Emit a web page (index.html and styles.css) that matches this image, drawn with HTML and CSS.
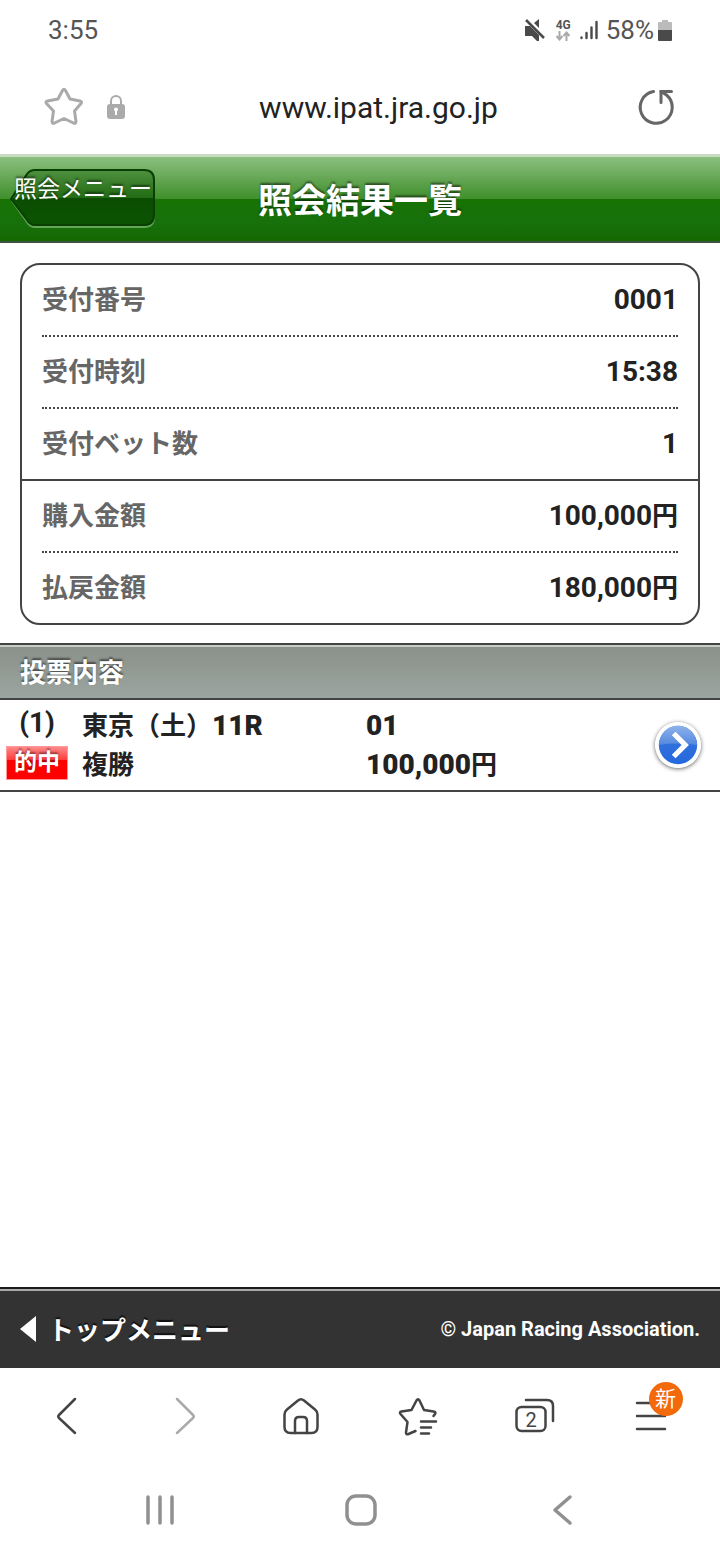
FILE: index.html
```html
<!DOCTYPE html>
<html lang="ja">
<head>
  <meta charset="UTF-8" />
  <meta name="viewport" content="width=device-width, initial-scale=1.0"/>
  <title>照会結果一覧</title>
  <link rel="stylesheet" href="styles.css">
</head>
<body>
  <!-- Status bar -->
  <div class="status-bar">
    <span>3:55</span>
    <div class="status-icons">
      <svg class="mute" width="20" height="22" viewBox="0 0 20 22">
        <path d="M0 7h5l9 9v6h-2l-5-5H0z" fill="#4a4a4a"/>
        <path d="M14 0v9l-5-5z" fill="#4a4a4a"/>
        <path d="M1 1l18 18" stroke="#4a4a4a" stroke-width="2.5"/>
      </svg>
      <div class="network">
        <span>4G</span>
        <svg width="14" height="10" viewBox="0 0 14 10" fill="none" stroke="#aaa" stroke-width="2">
          <path d="M3.500 0v8M0.500 5l3 3.500 3-3.500M10.500 10V2M7.500 5l3-3.500 3 3.500"/>
        </svg>
      </div>
      <svg class="signal" width="18" height="20" viewBox="0 0 18 20" fill="none" stroke="#4a4a4a" stroke-width="2.400" stroke-linecap="round">
        <path d="M1.500 17.500v.5M6.500 13v5M11.500 7.500V18M16.500 2v16"/>
      </svg>
      <span>58%</span>
      <svg class="battery" width="14" height="21" viewBox="0 0 14 21">
        <path d="M1 2h3V0h6v2h3q1 0 1 1v8H0V3q0-1 1-1z" fill="#bbb"/>
        <path d="M0 10h14v10q0 1-1 1H1q-1 0-1-1z" fill="#4a4a4a"/>
      </svg>
    </div>
  </div>

  <!-- Address bar -->
  <div class="address-bar">
    <button type="button" aria-label="お気に入り">
      <svg width="40" height="40" viewBox="0 0 40 40" fill="none" stroke="#aaa" stroke-width="3" stroke-linejoin="round">
        <path d="M18.500 3.500q1.500-2.500 3 0L26 12l10 2q2.500.5 1 2.500L30.500 24 32 34.500q0 2.500-2.500 1.500L20 31.500 10.500 36Q8 37 8 34.500L9.500 24 2.500 16.500q-1.500-2 1-2.500L14 12z"/>
      </svg>
    </button>
    <svg class="lock" width="18" height="26" viewBox="0 0 18 26">
      <path d="M4 12V7a5 5 0 0 1 10 0v5" fill="none" stroke="#aaa" stroke-width="2"/>
      <rect y="10" width="18" height="15" rx="3" fill="#aaa"/>
      <circle cx="9" cy="15.500" r="2" fill="#fff"/>
      <path d="M9 16v5" stroke="#fff" stroke-width="2"/>
    </svg>
    <span class="url">www.ipat.jra.go.jp</span>
    <button type="button" class="reload" aria-label="再読み込み">
      <svg width="40" height="40" viewBox="0 0 40 40" fill="none" stroke="#666" stroke-width="3" stroke-linecap="round">
        <path d="M17.500 4.500a16 16 0 1 0 13 3.500L25 4.500"/>
        <path d="M25 15.500v-11h10.500"/>
      </svg>
    </button>
  </div>

  <header class="page-header">
    <a href="#" class="back-link">
      <svg class="back-shape" width="146" height="61" viewBox="0 0 146 61">
        <defs>
          <linearGradient id="backFill" x1="0" y1="0" x2="0" y2="1">
            <stop offset="0" stop-color="#4f913f"/>
            <stop offset=".5" stop-color="#236b15"/>
            <stop offset=".5" stop-color="#0b4d02"/>
            <stop offset="1" stop-color="#0b5402"/>
          </linearGradient>
        </defs>
        <path d="M25 3h109q10 0 10 10v35q0 10-10 10H25q-5 0-8-5L2 32" fill="none" stroke="#65a557" stroke-width="2"/>
        <path d="M25 1h109q10 0 10 10v35q0 10-10 10H25q-5 0-8-5L1 30 17 5q3-4 8-4z" fill="url(#backFill)" stroke="#083f02" stroke-width="2"/>
      </svg>
      <span>照会メニュー</span>
    </a>
    <h1>照会結果一覧</h1>
  </header>

  <main>
    <dl class="summary">
      <div class="row"><dt>受付番号</dt><dd>0001</dd></div>
      <div class="row"><dt>受付時刻</dt><dd>15:38</dd></div>
      <div class="row"><dt>受付ベット数</dt><dd>1</dd></div>
      <div class="row group"><dt>購入金額</dt><dd>100,000<span>円</span></dd></div>
      <div class="row"><dt>払戻金額</dt><dd>180,000<span>円</span></dd></div>
    </dl>

    <h2>投票内容</h2>
    <a href="#" class="bet">
      <div class="bet-no">
        <span>(1)</span>
        <span class="hit">的中</span>
      </div>
      <div class="bet-race">
        <span>東京（土）<b>11R</b></span>
        <span>複勝</span>
      </div>
      <div class="bet-amount">
        <b>01</b>
        <span><b>100,000</b>円</span>
      </div>
      <svg class="bet-arrow" width="46" height="46" viewBox="0 0 48 48">
        <defs>
          <linearGradient id="arrowTop" x1="0" y1="0" x2="0" y2="1">
            <stop offset="0" stop-color="#8fb2ea"/>
            <stop offset="1" stop-color="#5288df"/>
          </linearGradient>
          <linearGradient id="arrowFill" x1="0" y1="0" x2="0" y2="1">
            <stop offset="0" stop-color="#3f78d8"/>
            <stop offset="1" stop-color="#2268df"/>
          </linearGradient>
        </defs>
        <circle cx="24" cy="24" r="24" fill="#fff"/>
        <circle cx="24" cy="24" r="20" fill="url(#arrowFill)"/>
        <path d="M4 24a20 20 0 0 1 40 0q-20-3-40 0z" fill="url(#arrowTop)"/>
        <path d="M19.500 12l12 12-12 12" fill="none" stroke="#fff" stroke-width="5.500"/>
      </svg>
    </a>
  </main>

  <footer class="page-footer">
    <a href="#">
      <svg width="16" height="26" viewBox="0 0 16 26"><path d="M16 0v26L0 13z" fill="#fff"/></svg>
      トップメニュー
    </a>
    <small>© Japan Racing Association.</small>
  </footer>

  <!-- Browser toolbar -->
  <nav class="toolbar">
    <button type="button" aria-label="戻る">
      <svg width="40" height="40" viewBox="0 0 40 40"><path d="M28 3L12 19q-1.500 1.500 0 3l16 15"/></svg>
    </button>
    <button type="button" aria-label="進む" disabled>
      <svg width="40" height="40" viewBox="0 0 40 40"><path d="M13 3l16 16q1.500 1.500 0 3L13 37"/></svg>
    </button>
    <button type="button" aria-label="ホーム">
      <svg width="40" height="40" viewBox="0 0 40 40">
        <path d="M17 4.500q3-2.500 6 0l11 9q2.500 2 2.500 5V31q0 6-6 6h-21q-6 0-6-6V18.500q0-3 2.500-5z"/>
        <path d="M14 37V25q0-4 4-4h4q4 0 4 4v12"/>
      </svg>
    </button>
    <button type="button" aria-label="ブックマーク">
      <svg width="40" height="40" viewBox="0 0 40 40">
        <path d="M17.500 35L10.500 38q-2.500 1-2.500-1.500L9.500 26 2.500 18q-1.500-2 1-2.500l10-1.500 5-9.500q1.500-2.500 3 0l4.500 9.500 9.500 1.500q3 .5 1.500 2.500L35.500 20"/>
        <path d="M23 25.500h15M23 31.500h10M23 37.500h8"/>
      </svg>
    </button>
    <button type="button" class="tabs" aria-label="タブ">
      <svg width="40" height="40" viewBox="0 0 40 40">
        <rect x="1.500" y="11" width="29" height="24" rx="5"/>
        <path d="M11 4h21q6 0 6 6v15"/>
        <text x="16" y="31" text-anchor="middle">2</text>
      </svg>
    </button>
    <button type="button" class="menu" aria-label="メニュー">
      <svg width="40" height="40" viewBox="0 0 40 40"><path d="M5 7h28M5 20h28M5 33h28"/></svg>
      <span class="new">新</span>
    </button>
  </nav>

  <!-- System navigation -->
  <nav class="system-nav">
    <button type="button" aria-label="履歴">
      <svg width="32" height="32" viewBox="0 0 32 32"><path d="M4 3v26M16 3v26M28 3v26"/></svg>
    </button>
    <button type="button" aria-label="ホーム画面">
      <svg width="32" height="32" viewBox="0 0 32 32"><rect x="2" y="2" width="28" height="28" rx="9"/></svg>
    </button>
    <button type="button" aria-label="前の画面">
      <svg width="32" height="32" viewBox="0 0 32 32"><path d="M24 3L9 16l15 13"/></svg>
    </button>
  </nav>
</body>
</html>
```

FILE: styles.css
```css
* {
  box-sizing: border-box;
}
body {
  margin: 0;
  min-height: 100vh;
  display: flex;
  flex-direction: column;
  background: #fff;
  color: #222;
  font-family: Roboto, "Noto Sans CJK JP", sans-serif;
  font-size: 26px;
}
a {
  color: inherit;
  text-decoration: none;
}
button {
  background: none;
  border: none;
  padding: 0;
  font-family: inherit;
}
svg {
  display: block;
}

/* status bar */
.status-bar {
  display: flex;
  justify-content: space-between;
  align-items: center;
  height: 60px;
  padding: 0 48px;
  color: #555;
}
.status-icons {
  display: flex;
  align-items: center;
  gap: 4px;
}
.network {
  display: flex;
  flex-direction: column;
  align-items: center;
  margin: 0 5px 0 7px;
  font-size: 12px;
  font-weight: bold;
  line-height: 12px;
}
.signal {
  margin-right: 4px;
}

/* address bar */
.address-bar {
  display: flex;
  align-items: center;
  height: 94px;
  padding: 0 40px 0 44px;
}
.lock {
  margin-left: 23px;
}
.url {
  flex: 1;
  text-align: center;
  font-size: 30px;
}
.reload {
  width: 48px;
  display: flex;
  justify-content: center;
}

/* page header */
.page-header {
  display: grid;
  grid-template-columns: 1fr auto 1fr;
  align-items: center;
  height: 89px;
  padding: 0 10px;
  border-top: 3px solid #c8dcc2;
  border-bottom: 2px solid #40533c;
  background: linear-gradient(#8cbf80, #3f8f2b 50%, #187304 50%, #17700c 80%, #156800);
  color: #fff;
}
.page-header h1 {
  margin: 0;
  padding-top: 4px;
  font-size: 34px;
  line-height: 50px;
  text-shadow: 0 -2px 2px rgba(0,0,0,0.5);
}
.back-link {
  position: relative;
  justify-self: start;
  width: 146px;
  height: 61px;
  padding-left: 4px;
  font-size: 23px;
  line-height: 42px;
  white-space: nowrap;
  text-shadow: 0 -2px 2px rgba(0,0,0,0.5);
}
.back-shape {
  position: absolute;
  top: 0;
  left: 0;
}
.back-link span {
  position: relative;
}

/* content */
main {
  flex: 1;
}
.summary {
  margin: 20px 20px 18px;
  border: 2px solid #444;
  border-radius: 20px;
  font-weight: bold;
}
.row {
  display: flex;
  justify-content: space-between;
  align-items: baseline;
  height: 72px;
  margin: 0 20px;
  padding-top: 14px;
  border-bottom: 2px dotted #444;
}
.row:last-child {
  height: 70px;
  border-bottom: none;
}
.row:has(+ .group) {
  margin: 0;
  padding: 14px 20px 0;
  border-bottom: 2px solid #444;
}
.row dt {
  color: #666;
}
.row dd {
  margin: 0;
  font-size: 28px;
}
.row dd span {
  font-size: 26px;
}
h2 {
  margin: 0;
  padding: 4px 20px 0;
  border-top: 2px solid #444;
  border-bottom: 2px solid #444;
  background: linear-gradient(#c8ccc9 2px, #8b918b 2px, #9ba59f);
  color: #fff;
  font-size: 26px;
  line-height: 49px;
  text-shadow: 0 -2px 2px rgba(0,0,0,0.5);
}
.bet {
  display: flex;
  align-items: center;
  height: 92px;
  padding: 0 19px 0 6px;
  border-bottom: 2px solid #444;
  font-weight: bold;
  line-height: 39px;
}
.bet b {
  font-size: 28px;
}
.bet-no {
  display: flex;
  flex-direction: column;
  align-items: center;
  width: 62px;
  margin-right: 14px;
  padding-bottom: 4px;
  font-size: 28px;
  line-height: 34px;
}
.hit {
  width: 100%;
  margin-top: 6px;
  border: 1px solid #f99;
  background: linear-gradient(#ff8a8a, #ff3c3c 40%, #f00 40%, #f00);
  color: #fff;
  font-size: 23px;
  line-height: 32px;
  text-align: center;
  text-shadow: 0 -2px 2px rgba(0,0,0,0.4);
}
.bet-race,
.bet-amount {
  display: flex;
  flex-direction: column;
}
.bet-race {
  flex: 0 0 284px;
}
.bet-amount {
  flex: 1;
}
.bet-arrow {
  border-radius: 50%;
  box-shadow: 0 1px 4px rgba(0,0,0,0.6);
}

/* page footer */
.page-footer {
  display: flex;
  justify-content: space-between;
  align-items: center;
  height: 81px;
  padding: 0 20px;
  border-top: 2px solid #1c1c1c;
  background: linear-gradient(#aaa 2px, #333 2px);
  color: #fff;
  font-weight: bold;
}
.page-footer a {
  display: flex;
  align-items: center;
  gap: 12px;
  text-shadow: 0 -2px 1px #111;
}
.page-footer small {
  font-size: 20px;
}

/* browser toolbar */
.toolbar {
  display: grid;
  grid-template-columns: repeat(6, 1fr);
  align-items: center;
  height: 96px;
  padding: 0 10px 0 8px;
}
.toolbar button,
.system-nav button {
  position: relative;
  display: flex;
  justify-content: center;
}
.toolbar svg {
  fill: none;
  stroke: #444;
  stroke-width: 2.5px;
  stroke-linecap: round;
  stroke-linejoin: round;
}
.toolbar button:disabled svg {
  stroke: #aaa;
}
.tabs text {
  fill: #444;
  stroke: none;
  font-size: 20px;
}
.new {
  position: absolute;
  top: -14px;
  left: calc(50% - 3px);
  width: 34px;
  height: 34px;
  border-radius: 50%;
  background: #f26a0c;
  color: #fff;
  font-size: 21px;
  line-height: 34px;
}

/* system navigation */
.system-nav {
  display: grid;
  grid-template-columns: repeat(3, 1fr);
  align-items: center;
  height: 96px;
  padding: 0 57px 4px 59px;
}
.system-nav svg {
  fill: none;
  stroke: #909090;
  stroke-width: 3.5px;
  stroke-linecap: round;
  stroke-linejoin: round;
}
```
